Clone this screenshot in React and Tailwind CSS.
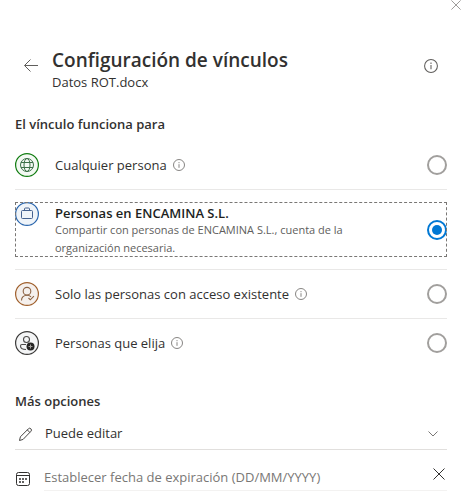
import React, { useState } from 'react';

const InfoIcon = ({ size = 12 }) => (
  <svg width={size} height={size} viewBox="0 0 12 12" fill="none" stroke="currentColor" strokeWidth="0.9">
    <circle cx="6" cy="6" r="5.5" />
    <path d="M6 5.2v3.6M6 3.1v1.1" />
  </svg>
);

const CrossIcon = ({ size = 12 }) => (
  <svg width={size} height={size} viewBox="0 0 12 12" fill="none" stroke="currentColor">
    <path d="M0.5 0.5l11 11M11.5 0.5l-11 11" />
  </svg>
);

const GlobeIcon = () => (
  <svg width="24" height="24" viewBox="0 0 24 24" fill="none">
    <circle cx="12" cy="12" r="11.4" fill="#f3f9f3" stroke="#107c10" strokeWidth="1.2" />
    <g stroke="#3d7048" strokeWidth="1">
      <circle cx="12" cy="12" r="6.5" />
      <ellipse cx="12" cy="12" rx="3" ry="6.5" />
      <path d="M6 9.5h12M6 14.5h12" />
    </g>
  </svg>
);

const BriefcaseIcon = () => (
  <svg width="24" height="24" viewBox="0 0 24 24" fill="none">
    <circle cx="12" cy="12" r="11.4" fill="#eff4f9" stroke="#2b66ad" strokeWidth="1.2" />
    <g stroke="#44618f" strokeWidth="1">
      <rect x="6.5" y="8.5" width="11" height="8" rx="1" />
      <path d="M9.5 8.5V7a1 1 0 0 1 1-1h3a1 1 0 0 1 1 1v1.5" />
    </g>
  </svg>
);

const PersonCheckIcon = () => (
  <svg width="24" height="24" viewBox="0 0 24 24" fill="none">
    <circle cx="12" cy="12" r="11.4" fill="#f5f0ed" stroke="#a0602d" strokeWidth="1.2" />
    <g stroke="#8c6344" strokeWidth="1.1">
      <circle cx="12" cy="9.2" r="3.8" />
      <path d="M6.5 18.5c0-3 2.2-5.3 5.5-5.3 1.7 0 3 .5 4 1.6M13.5 16l1.8 1.8 3.6-3.6" />
    </g>
  </svg>
);

const PersonAddIcon = () => (
  <svg width="24" height="24" viewBox="0 0 24 24" fill="none">
    <circle cx="12" cy="12" r="11.4" fill="#f4f5f6" stroke="#3b3a39" strokeWidth="1.2" />
    <g stroke="#4b4a49" strokeWidth="1.1">
      <circle cx="11.5" cy="8.5" r="3" />
      <path d="M11 13.5H7A1.5 1.5 0 0 0 5.5 15c0 2.2 2.3 3.5 5.5 3.5" />
    </g>
    <circle cx="15.5" cy="15.5" r="4" fill="#252423" />
    <path d="M15.5 13.5v4M13.5 15.5h4" stroke="#a19f9d" />
  </svg>
);

const options = [
  { id: 'anyone', label: 'Cualquier persona', icon: GlobeIcon, info: true },
  {
    id: 'company',
    label: 'Personas en ENCAMINA S.L.',
    description: 'Compartir con personas de ENCAMINA S.L., cuenta de la organización necesaria.',
    icon: BriefcaseIcon,
  },
  { id: 'existing', label: 'Solo las personas con acceso existente', icon: PersonCheckIcon, info: true },
  { id: 'specific', label: 'Personas que elija', icon: PersonAddIcon, info: true },
];

const App = () => {
  const [selected, setSelected] = useState('company');
  const [permission, setPermission] = useState('edit');
  const [expiration, setExpiration] = useState('');

  return (
    <div className="bg-white pl-[15px] pr-[17px] font-['Open_Sans','Noto_Sans',sans-serif] text-[13px] text-[#323130]">
      {/* Close */}
      <div className="-mr-[14px] flex h-12 items-start justify-end">
        <button type="button" aria-label="Cerrar" className="text-[#8a8886]">
          <CrossIcon size={10} />
        </button>
      </div>

      {/* Header */}
      <header className="flex items-start pr-[9px]">
        <button type="button" aria-label="Atrás" className="mt-[11px] mr-[14px] ml-[9px] text-[#605e5c]">
          <svg width="14" height="13" viewBox="0 0 14 13" fill="none" stroke="currentColor">
            <path d="M0.7 6.5H14M6.5 0.5l-6 6 6 6" />
          </svg>
        </button>
        <div className="flex-1">
          <h1 className="text-[19px] leading-6 font-semibold">Configuración de vínculos</h1>
          <p className="leading-5">Datos ROT.docx</p>
        </div>
        <button type="button" aria-label="Información" className="mt-[11px] text-[#605e5c]">
          <InfoIcon size={14} />
        </button>
      </header>

      {/* Link scope */}
      <section className="pt-[22px]">
        <h2 id="scope-title" className="leading-5 font-semibold">
          El vínculo funciona para
        </h2>
        <div role="radiogroup" aria-labelledby="scope-title" className="mt-[7px] divide-y divide-[#e9e8e7]">
          {options.map(({ id, label, description, icon: Icon, info }) => (
            <div key={id} className="py-3">
              <label
                htmlFor={id}
                className={
                  description
                    ? 'flex outline outline-1 -outline-offset-1 outline-dashed outline-[#797775]'
                    : 'flex'
                }
              >
                <span className="mr-4 h-6 shrink-0">
                  <Icon />
                </span>
                <span className="min-w-0 flex-1">
                  <span
                    className={
                      description
                        ? 'block pt-[3px] leading-4 font-semibold text-[#201f1e]'
                        : 'flex items-center gap-[6px] leading-6'
                    }
                  >
                    {label}
                    {info && (
                      <span className="text-[#797775]">
                        <InfoIcon />
                      </span>
                    )}
                  </span>
                  {description && (
                    <span className="block pr-12 text-[11px] leading-[18px] text-[#605e5c]">{description}</span>
                  )}
                </span>
                <input
                  type="radio"
                  id={id}
                  name="scope"
                  checked={selected === id}
                  onChange={() => setSelected(id)}
                  className="flex h-5 w-5 shrink-0 appearance-none items-center justify-center self-center rounded-full border-2 border-[#a19f9d] bg-white checked:border-[#0078d4] checked:before:h-[10px] checked:before:w-[10px] checked:before:rounded-full checked:before:bg-[#0078d4]"
                />
              </label>
            </div>
          ))}
        </div>
      </section>

      {/* More options */}
      <section className="pt-6">
        <h2 className="leading-5 font-semibold">Más opciones</h2>

        <div className="mt-2 flex h-[31px] items-center border-b border-[#e1dfdd] pr-[9px]">
          <svg className="mr-3 ml-[3px] shrink-0" width="15" height="15" viewBox="0 0 15 15" fill="none" stroke="#484644">
            <path d="M1.5 13.5l.9-3.7 8-8a1.75 1.75 0 0 1 2.5 0 1.75 1.75 0 0 1 0 2.5l-7.800 8.100zM9.3 2.900l2.500 2.500" />
          </svg>
          <select
            aria-label="Permiso"
            value={permission}
            onChange={(e) => setPermission(e.target.value)}
            className="h-6 min-w-0 flex-1 appearance-none bg-transparent"
          >
            <option value="edit">Puede editar</option>
            <option value="view">Puede ver</option>
          </select>
          <svg width="10" height="6" viewBox="0 0 10 6" fill="none" stroke="#797775">
            <path d="M0.5 0.5L5 5l4.5-4.5" />
          </svg>
        </div>

        <div className="flex pt-4">
          <svg className="mt-[5px] mr-[14px] shrink-0" width="15" height="15" viewBox="0 0 15 15" fill="none" stroke="#323130">
            <rect x="1.5" y="1.5" width="13" height="13" rx="2" />
            <path d="M1.5 4.5h13" />
            <path d="M4 8h2M7 8h2M10 8h2M4 11h2M7 11h2" strokeWidth="1.5" />
          </svg>
          <div className="flex min-w-0 flex-1 items-start border-b border-[#f3f2f1] pr-[2px] pb-[2px]">
            <input
              type="text"
              aria-label="Fecha de expiración"
              placeholder="Establecer fecha de expiración (DD/MM/YYYY)"
              value={expiration}
              onChange={(e) => setExpiration(e.target.value)}
              className="h-[22px] min-w-0 flex-1 bg-transparent outline-none placeholder:text-[#797775]"
            />
            <button
              type="button"
              aria-label="Quitar fecha"
              className="mt-[2px] text-[#323130]"
              onClick={() => setExpiration('')}
            >
              <CrossIcon />
            </button>
          </div>
        </div>
      </section>
    </div>
  );
};

export default App;
